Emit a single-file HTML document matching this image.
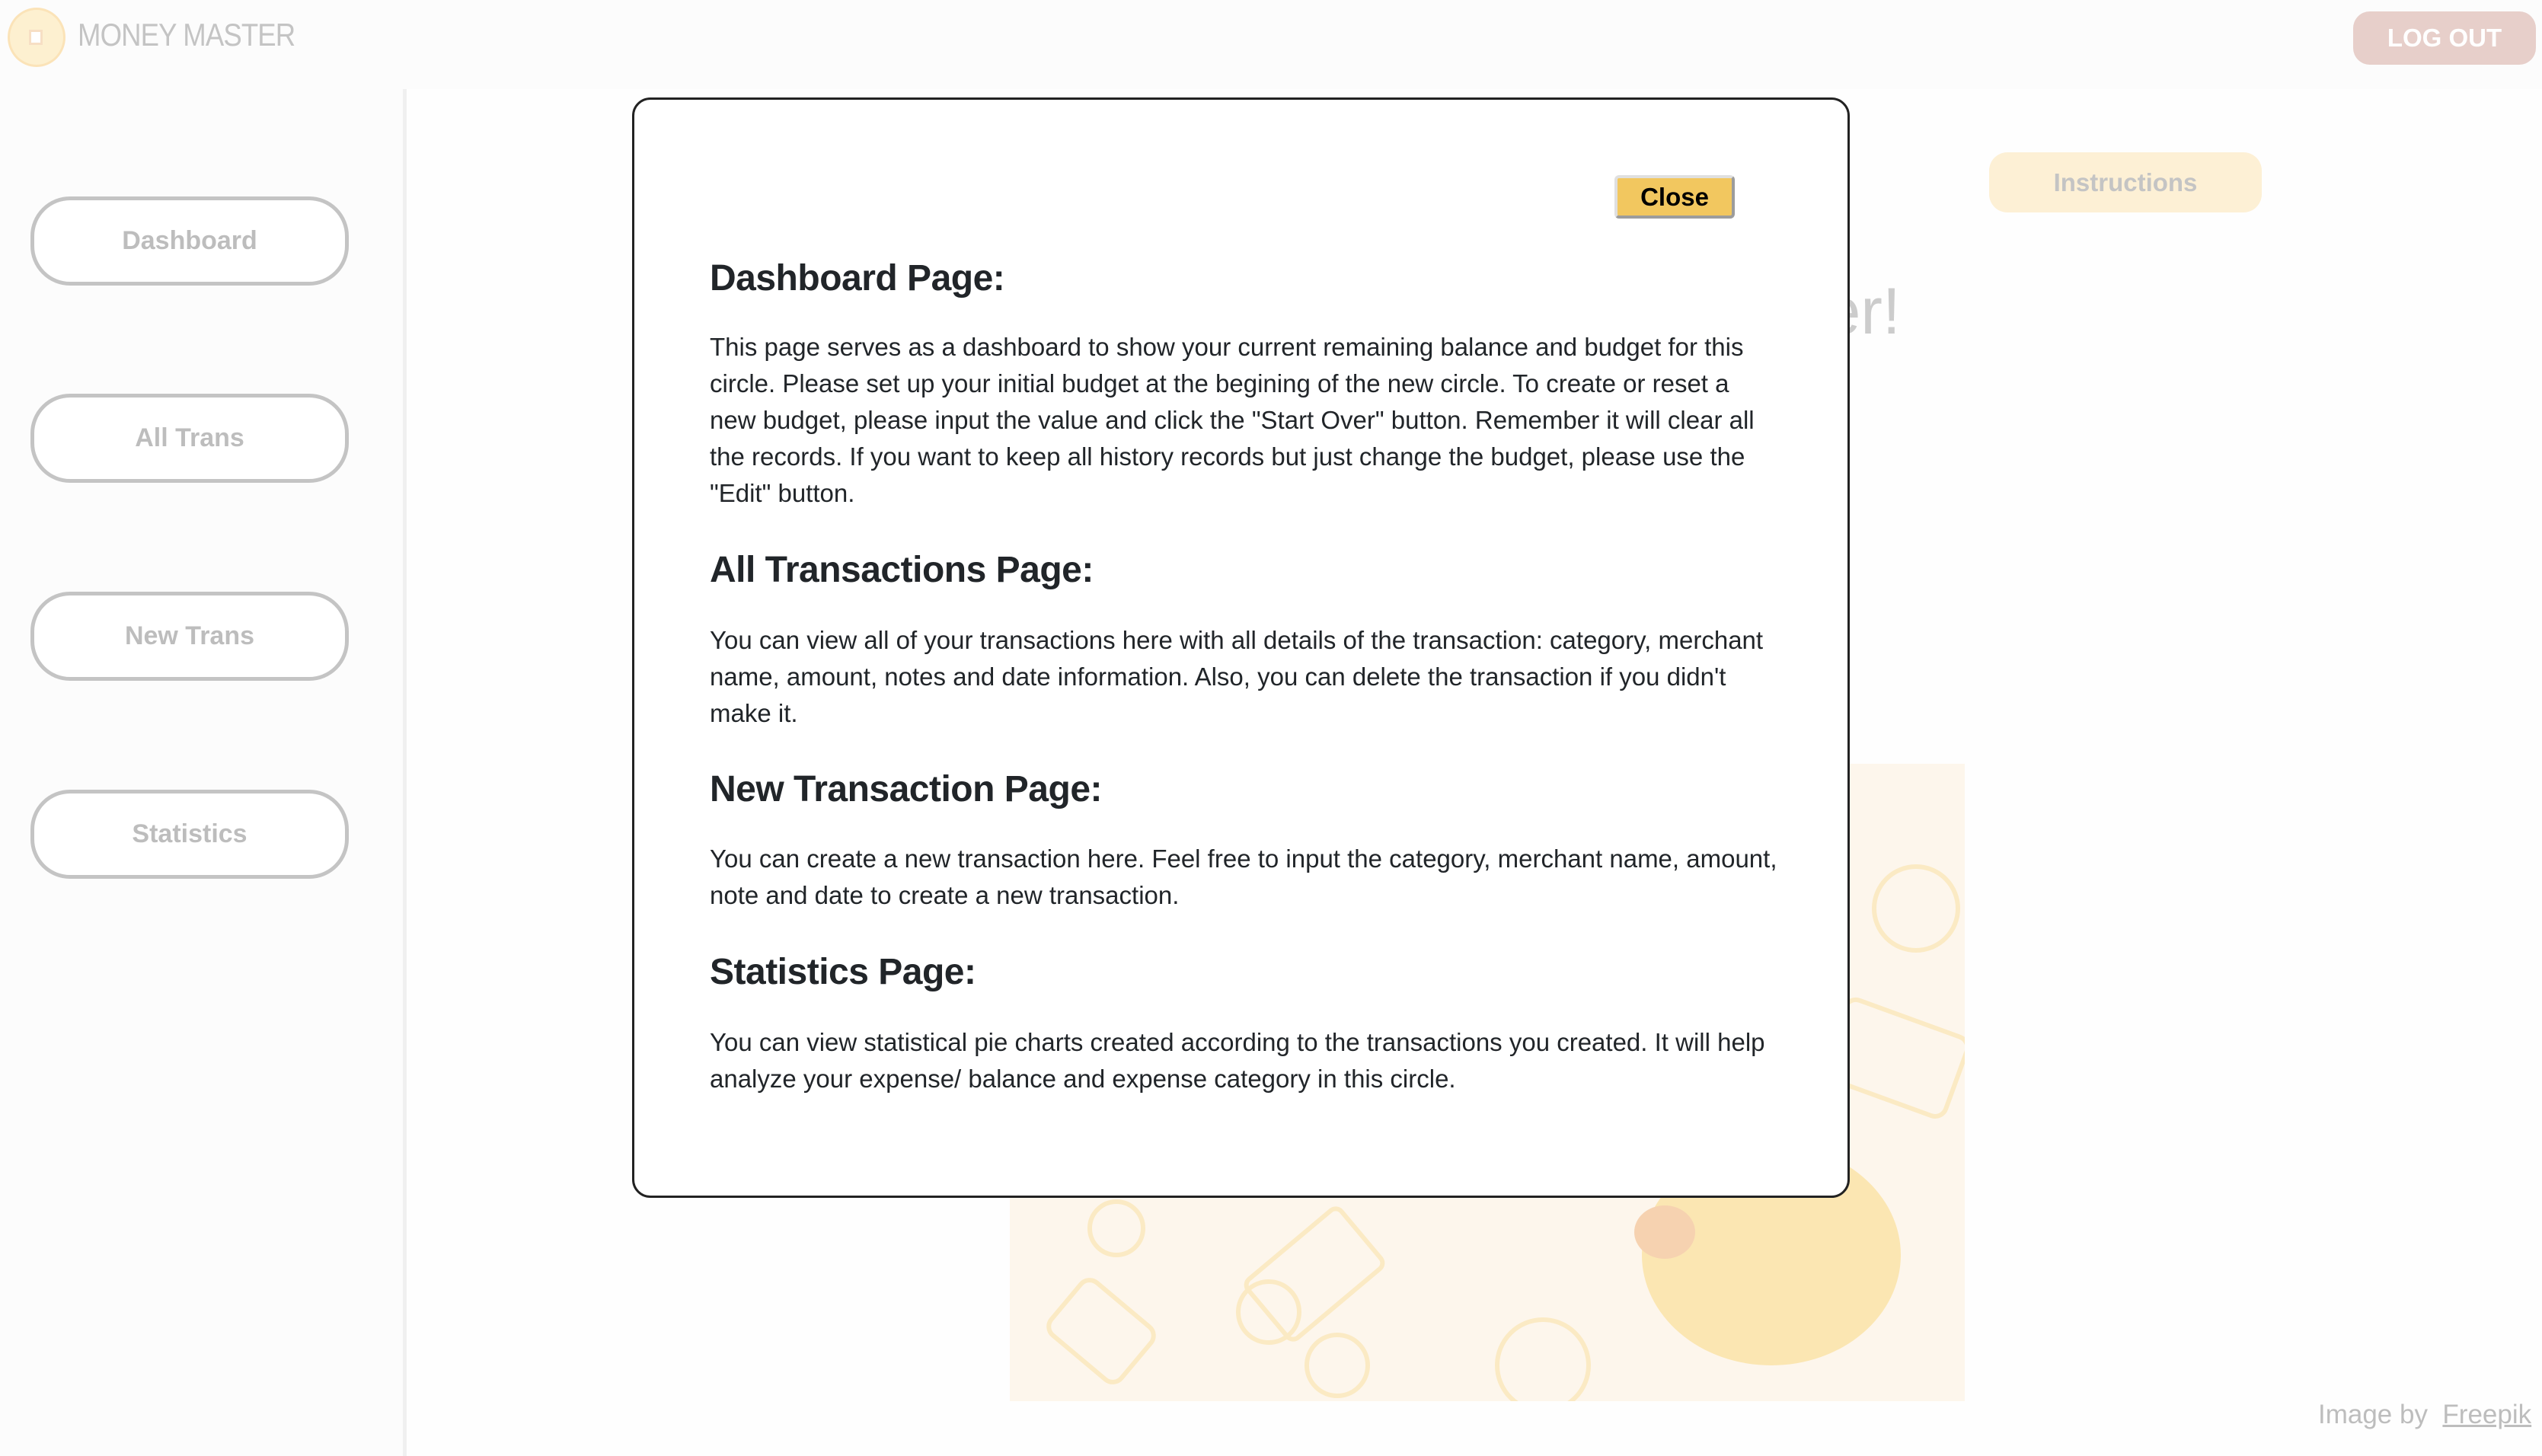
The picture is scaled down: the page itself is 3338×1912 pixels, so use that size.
<!DOCTYPE html>
<html><head><meta charset="utf-8"><style>
*{margin:0;padding:0;box-sizing:border-box}
body{width:3338px;height:1912px;background:#fefefe;position:relative;overflow:hidden;font-family:"Liberation Sans",sans-serif}
.abs{position:absolute}
.nav{position:absolute;left:40px;width:418px;height:117px;border:5px solid #c4c4c4;border-radius:52px;background:#fff;color:#bdbdbd;font-weight:bold;font-size:34px;display:flex;align-items:center;justify-content:center}
.h{position:absolute;left:932px;font-size:48px;font-weight:bold;color:#212529;line-height:60px;white-space:nowrap;letter-spacing:-0.5px}
.p{position:absolute;left:932px;font-size:33px;color:#212529;line-height:48px;white-space:nowrap}
</style></head><body>
<div class="abs" style="left:0;top:0;width:3338px;height:117px;background:#fcfcfc"></div>
<div class="abs" style="left:10px;top:10px;width:76px;height:78px;border-radius:50%;background:#fdf0d0;border:3px solid #fbe3b8"></div>
<div class="abs" style="left:38px;top:39px;width:18px;height:20px;background:#fff;border:3px solid #f7dfc4"></div>
<div class="abs" style="left:102px;top:22px;font-size:42px;color:#c4c4c4;letter-spacing:-1px;transform:scaleX(0.87);transform-origin:left top;white-space:nowrap">MONEY MASTER</div>
<div class="abs" style="left:3090px;top:15px;width:240px;height:70px;border-radius:22px;background:#e7cfca;color:#fff;font-weight:bold;font-size:33px;display:flex;align-items:center;justify-content:center">LOG OUT</div>
<div class="abs" style="left:0;top:117px;width:534px;height:1795px;background:#fcfcfc;border-right:5px solid #f0f0f0"></div>
<div class="nav" style="top:258px">Dashboard</div>
<div class="nav" style="top:517px">All Trans</div>
<div class="nav" style="top:777px">New Trans</div>
<div class="nav" style="top:1037px">Statistics</div>
<div class="abs" style="left:2612px;top:200px;width:358px;height:79px;border-radius:24px;background:#fdf0d5;color:#c4c4c4;font-weight:bold;font-size:33px;display:flex;align-items:center;justify-content:center">Instructions</div>
<div class="abs" style="left:1900px;top:360px;font-size:86px;color:#cccccc;white-space:nowrap">Welcome, user!</div>
<div class="abs" style="left:1326px;top:1003px;width:1254px;height:837px;background:#fdf6ec;overflow:hidden">
<svg width="1254" height="837" viewBox="0 0 1254 837" fill="none" stroke="#fbeac4" stroke-width="6">
<circle cx="1190" cy="190" r="55"/><rect x="1080" y="330" width="170" height="110" rx="15" transform="rotate(20 1160 380)"/>
<rect x="320" y="620" width="160" height="100" rx="10" transform="rotate(-40 400 670)"/>
<circle cx="340" cy="720" r="40"/><circle cx="430" cy="790" r="40"/><circle cx="700" cy="790" r="60"/>
<rect x="60" y="700" width="120" height="90" rx="15" transform="rotate(40 120 745)"/>
<circle cx="140" cy="610" r="35"/></svg>
<div class="abs" style="left:830px;top:500px;width:340px;height:290px;border-radius:50%;background:#fbe6b2"></div>
<div class="abs" style="left:820px;top:580px;width:80px;height:70px;border-radius:50%;background:#f6d2b0"></div>
</div>
<div class="abs" style="left:3044px;top:1838px;font-size:35px;color:#bdbdbd;white-space:nowrap">Image by&nbsp; <span style="text-decoration:underline">Freepik</span></div>
<div class="abs" style="left:830px;top:128px;width:1599px;height:1445px;background:#fff;border:3px solid #222;border-radius:24px"></div>
<div class="abs" style="left:2120px;top:230px;width:158px;height:57px;background:#f2c75f;border:4px solid #e0e0e0;border-bottom-color:#9c9c9c;border-right-color:#9c9c9c;border-radius:6px;font-weight:bold;font-size:33px;color:#000;display:flex;align-items:center;justify-content:center">Close</div>
<div class="h" style="top:336px">Dashboard Page:</div>
<div class="p" style="top:432px">This page serves as a dashboard to show your current remaining balance and budget for this<br>circle. Please set up your initial budget at the begining of the new circle. To create or reset a<br>new budget, please input the value and click the "Start Over" button. Remember it will clear all<br>the records. If you want to keep all history records but just change the budget, please use the<br>"Edit" button.</div>
<div class="h" style="top:719px">All Transactions Page:</div>
<div class="p" style="top:817px">You can view all of your transactions here with all details of the transaction: category, merchant<br>name, amount, notes and date information. Also, you can delete the transaction if you didn't<br>make it.</div>
<div class="h" style="top:1007px">New Transaction Page:</div>
<div class="p" style="top:1104px">You can create a new transaction here. Feel free to input the category, merchant name, amount,<br>note and date to create a new transaction.</div>
<div class="h" style="top:1247px">Statistics Page:</div>
<div class="p" style="top:1345px">You can view statistical pie charts created according to the transactions you created. It will help<br>analyze your expense/ balance and expense category in this circle.</div>
</body></html>
